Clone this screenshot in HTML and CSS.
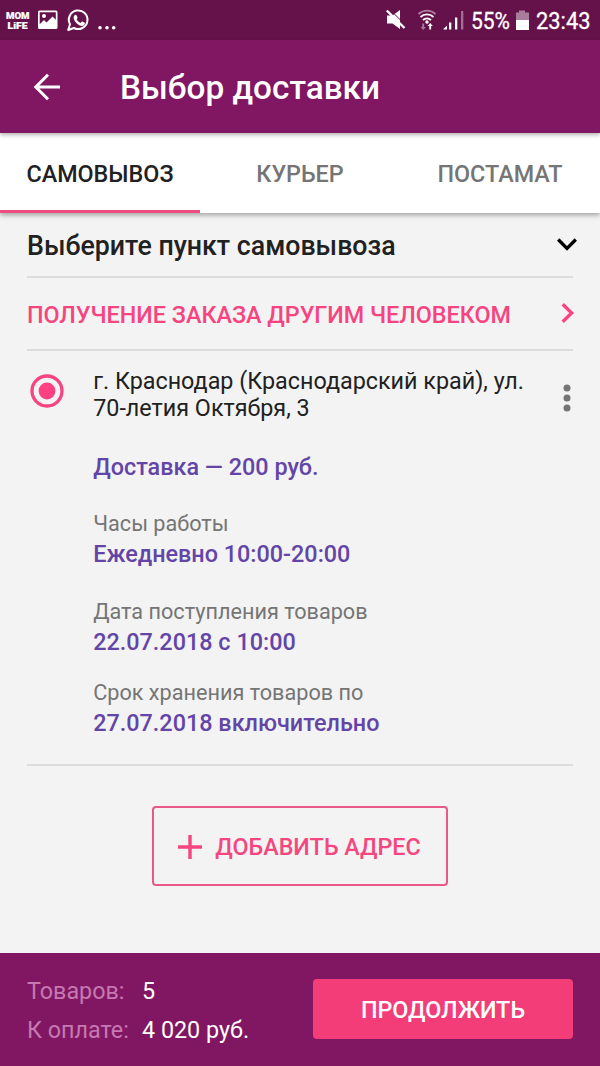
FILE: index.html
```html
<!DOCTYPE html>
<html lang="ru">
<head>
<meta charset="utf-8">
<title>Выбор доставки</title>
<link rel="stylesheet" href="styles.css">
</head>
<body>
<div class="screen">
  <div class="statusbar">
    <svg width="600" height="40" viewBox="0 0 600 40" fill="#fff">
      <g class="momlife">
        <text x="6" y="18.500" textLength="23.5" lengthAdjust="spacingAndGlyphs">MOM</text>
        <text x="7.500" y="28.500" textLength="20" lengthAdjust="spacingAndGlyphs">LiFE</text>
      </g>
      <path fill-rule="evenodd" d="M39.500 10.500h16.500a1.500 1.500 0 0 1 1.500 1.500v15.500a1.500 1.500 0 0 1-1.500 1.500h-16.500a1.500 1.500 0 0 1-1.500-1.500V12a1.500 1.500 0 0 1 1.500-1.500zM39.700 12.300v12l4.300-4.300 2.500 2.500 6-6 3.300 3.300v-7.500z"/>
      <circle cx="44" cy="16" r="2"/>
      <path d="M68.200 30l1.800-5.800a9.300 9.300 0 1 1 3.900 3.800z" fill="none" stroke="#fff" stroke-width="2" stroke-linejoin="round"/>
      <path d="M74.300 15.600c.9-1.200 2-1 2.400-.1l.8 1.900c.3.700-.8 1.500-.9 1.900.9 1.700 2.200 2.900 4 3.600.6-.2 1.100-1.600 1.800-1.300l2.100 1c.8.500.2 2.200-.9 2.900-1.800 1.100-4.800-.2-6.700-1.900-2.500-2.300-4.300-5.700-2.600-8z"/>
      <circle cx="100" cy="27.800" r="1.800"/><circle cx="107" cy="27.800" r="1.800"/><circle cx="113.700" cy="27.800" r="1.800"/>
      <path d="M387 15.500h5.500l7.500-5.500v19l-7.500-5.500h-5.500z"/>
      <path d="M394 13.600l12 12" stroke="#65114a" stroke-width="1"/>
      <path d="M386.800 10.500l17.700 17.500" stroke="#fff" stroke-width="2.400"/>
      <g fill="none" stroke="#fff" stroke-width="1.800">
        <path d="M418.500 14a12.500 12.500 0 0 1 17 0" opacity=".45"/>
        <path d="M420.500 17a9.500 9.500 0 0 1 13 0"/>
        <path d="M423 20a6 6 0 0 1 8 0"/>
      </g>
      <circle cx="427" cy="22" r="1.700"/>
      <path d="M422.300 23.500h1.800v3.500h1.700l-2.600 3-2.600-3h1.700z" opacity=".45"/>
      <path d="M429.300 29.500h1.800v-3.500h1.700l-2.600-3-2.600 3h1.700z"/>
      <path d="M443.500 29.500v-.8l3.500-3v3.800zM449 22.500h2.300v7H449zM455 17.500h2.300v12H455z"/>
      <path d="M461 11h2.300v18.500H461z" opacity=".4"/>
      <text class="status-text" x="471" y="29.300" textLength="39" lengthAdjust="spacingAndGlyphs">55%</text>
      <path d="M519 10.500h6v2h4v7.500h-13v-7.500h3z" opacity=".45"/>
      <path d="M516 20h13v10h-13z"/>
      <text class="status-text" x="536" y="29.300" textLength="54.500" lengthAdjust="spacingAndGlyphs">23:43</text>
    </svg>
  </div>

  <header class="appbar">
    <svg class="back" width="28" height="28" viewBox="0 0 28 28" fill="none" stroke="#fff" stroke-width="3"><path d="M15 1.800L2.800 14 15 26.200M2.800 14H27"/></svg>
    <h1 class="title">Выбор доставки</h1>
  </header>

  <nav class="tabs">
    <div class="tab tab-active">САМОВЫВОЗ</div>
    <div class="tab">КУРЬЕР</div>
    <div class="tab">ПОСТАМАТ</div>
  </nav>

  <main class="content">
    <div class="row row-heading">
      <h2 class="heading">Выберите пункт самовывоза</h2>
      <svg class="chev-down" width="20" height="13" viewBox="0 0 20 13" fill="none" stroke="#000" stroke-width="3.300"><path d="M1.200 1.500L10 10.300l8.800-8.800"/></svg>
    </div>
    <div class="row row-link">
      <span class="link">ПОЛУЧЕНИЕ ЗАКАЗА ДРУГИМ ЧЕЛОВЕКОМ</span>
      <svg class="chev-right" width="13" height="20" viewBox="0 0 13 20" fill="none" stroke="#ff4081" stroke-width="3.300"><path d="M1.700 1.200L10.700 10l-9 8.800"/></svg>
    </div>
    <section class="point">
      <svg class="radio" width="34" height="34" viewBox="0 0 34 34"><circle cx="17" cy="17" r="15" fill="none" stroke="#f6447f" stroke-width="3.300"/><circle cx="17" cy="17" r="8.400" fill="#ff4081"/></svg>
      <div class="details">
        <p class="address">г. Краснодар (Краснодарский край), ул.<br>70-летия Октября, 3</p>
        <p class="value value-price">Доставка — 200 руб.</p>
        <p class="label">Часы работы</p>
        <p class="value value-hours">Ежедневно 10:00-20:00</p>
        <p class="label label-date">Дата поступления товаров</p>
        <p class="value value-date">22.07.2018 с 10:00</p>
        <p class="label label-keep">Срок хранения товаров по</p>
        <p class="value value-keep">27.07.2018 включительно</p>
      </div>
      <svg class="more" width="8" height="28" viewBox="0 0 8 28" fill="#757575"><circle cx="4" cy="4" r="3.500"/><circle cx="4" cy="14" r="3.500"/><circle cx="4" cy="24" r="3.500"/></svg>
    </section>
    <button class="add">
      <svg width="24" height="24" viewBox="0 0 24 24" stroke="#f5477f" stroke-width="3.400"><path d="M12 0v24M0 12h24"/></svg>
      <span class="add-text">ДОБАВИТЬ АДРЕС</span>
    </button>
  </main>

  <footer class="footer">
    <div class="totals">
      <span class="total-label">Товаров:</span><span class="total-value">5</span>
      <span class="total-label">К оплате:</span><span class="total-value">4 020 руб.</span>
    </div>
    <button class="continue">ПРОДОЛЖИТЬ</button>
  </footer>
</div>
</body>
</html>
```
FILE: styles.css
```css
* { box-sizing: border-box; margin: 0; padding: 0; }
body { font-family: Roboto, "Noto Sans", sans-serif; font-size: 23.33px; color: #212121; }
svg { display: block; flex: none; }
button { font: inherit; background: none; border: 0; }
.screen { width: 600px; height: 1066px; display: flex; flex-direction: column; background: #f3f3f3; overflow: hidden; white-space: nowrap; }
.statusbar { height: 40px; flex: none; background: #65114a; }
.momlife { font: 900 8.500px Roboto, sans-serif; stroke: #fff; stroke-width: .2; }
.status-text { font: 400 24px Roboto, sans-serif; stroke: #fff; stroke-width: .3; }
.appbar { height: 93px; flex: none; display: flex; align-items: center; padding: 2px 0 0 33px; background: #811762; box-shadow: 0 2px 4px rgba(0,0,0,.3); z-index: 2; }
.back { margin-bottom: 2px; }
.title { margin-left: 59px; font-size: 33.33px; font-weight: 500; color: #fff; }
.tabs { height: 80px; flex: none; display: flex; background: #fff; box-shadow: 0 2px 5px rgba(0,0,0,.35); z-index: 1; }
.tab { width: 200px; line-height: 82px; text-align: center; font-weight: 500; color: #757575; }
.tab-active { color: #212121; border-bottom: 3px solid #ee4b80; }
.content { flex: 1; padding: 0 27px; display: flex; flex-direction: column; }
.row { display: flex; justify-content: space-between; align-items: center; border-bottom: 2px solid #dcdcdc; }
.row-heading { height: 65px; padding-top: 3px; }
.heading { font-size: 26.75px; font-weight: 500; }
.chev-down { margin: 0 -4px 4px 0; }
.row-link { height: 73px; padding-top: 2px; }
.link { font-weight: 500; color: #f6447f; }
.chev-right { margin: 0 -1px 4px 0; }
.point { height: 415px; display: flex; border-bottom: 2px solid #dcdcdc; }
.radio { margin: 23px 0 0 2.700px; }
.details { flex: 1; padding: 17px 0 0 29.500px; line-height: 28px; }
.address { line-height: 27px; }
.value { font-size: 23.400px; font-weight: 500; color: #6345a8; }
.label { font-size: 21.67px; color: #757575; margin-top: 29px; }
.value-price { margin-top: 31px; }
.value-hours, .value-date { margin-top: 2px; }
.label-date { margin-top: 30px; }
.label-keep { margin-top: 23px; }
.value-keep { margin-top: 2px; }
.more { margin: 33px 2.500px 0 0; }
.add { align-self: center; width: 296px; height: 80px; margin: 40px 1px 0 0; padding-top: 1px; display: flex; align-items: center; justify-content: center; gap: 13px; border: 2px solid #e9588a; border-radius: 4px; color: #f5477f; font-weight: 500; }
.footer { height: 113px; flex: none; padding: 0 27px; display: flex; justify-content: space-between; align-items: center; background: #811762; }
.totals { display: grid; grid-template-columns: 115px auto; line-height: 38.500px; padding-top: 2px; }
.total-label { color: #c678b1; }
.total-value { color: #fff; }
.continue { width: 260px; height: 60px; margin-bottom: 1px; border-radius: 4px; background: #f33d79; color: #fff; font-weight: 500; padding-top: 2px; }
```
